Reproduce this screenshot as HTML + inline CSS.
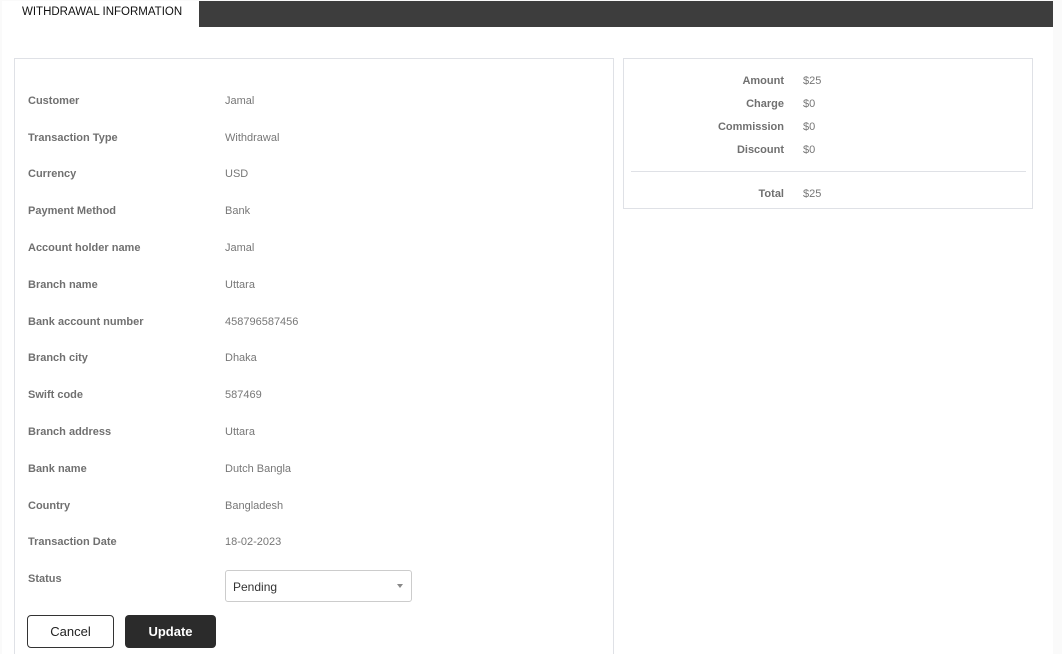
<!DOCTYPE html>
<html><head><style>
html,body{margin:0;width:1062px;height:654px;overflow:hidden}
body{background:#fafafa;font-family:"Liberation Sans",sans-serif;position:relative}
.main{position:absolute;left:2px;top:1px;width:1051px;height:653px;background:#fff}
.bar{position:absolute;left:199px;top:1px;width:854px;height:26px;background:#3d3d3d}
.tab{position:absolute;left:22px;top:6px;font-size:11.5px;color:#111}
.lp{position:absolute;left:14px;top:58px;width:598px;height:600px;border:1px solid #dfe1e6}
.rp{position:absolute;left:623px;top:58px;width:408px;height:149px;border:1px solid #dfe1e6}
.row{position:absolute;font-size:11px;color:#777}
.l{left:28px;font-weight:bold;color:#707070}
.v{left:225px}
.sl{position:absolute;width:150px;left:634px;text-align:right;font-size:11px;font-weight:bold;color:#707070}
.sv{position:absolute;left:803px;font-size:11px;color:#777}
.sel{position:absolute;left:225px;top:570px;width:185px;height:30px;border:1px solid #ccc;border-radius:3px;font-size:12px;color:#333}
.btn{position:absolute;top:615px;border-radius:4px;font-size:13px;text-align:center}
</style></head><body>
<div class="main"></div>
<div class="bar"></div>
<div class="tab">WITHDRAWAL INFORMATION</div>
<div class="lp"></div>
<div class="rp"></div>
<div class="row l" style="top:95px">Customer</div><div class="row v" style="top:95px">Jamal</div>
<div class="row l" style="top:132px">Transaction Type</div><div class="row v" style="top:132px">Withdrawal</div>
<div class="row l" style="top:168px">Currency</div><div class="row v" style="top:168px">USD</div>
<div class="row l" style="top:205px">Payment Method</div><div class="row v" style="top:205px">Bank</div>
<div class="row l" style="top:242px">Account holder name</div><div class="row v" style="top:242px">Jamal</div>
<div class="row l" style="top:279px">Branch name</div><div class="row v" style="top:279px">Uttara</div>
<div class="row l" style="top:316px">Bank account number</div><div class="row v" style="top:316px">458796587456</div>
<div class="row l" style="top:352px">Branch city</div><div class="row v" style="top:352px">Dhaka</div>
<div class="row l" style="top:389px">Swift code</div><div class="row v" style="top:389px">587469</div>
<div class="row l" style="top:426px">Branch address</div><div class="row v" style="top:426px">Uttara</div>
<div class="row l" style="top:463px">Bank name</div><div class="row v" style="top:463px">Dutch Bangla</div>
<div class="row l" style="top:500px">Country</div><div class="row v" style="top:500px">Bangladesh</div>
<div class="row l" style="top:536px">Transaction Date</div><div class="row v" style="top:536px">18-02-2023</div>
<div class="row l" style="top:573px">Status</div>
<div class="sel"><span style="position:absolute;left:7px;top:9px">Pending</span><span style="position:absolute;right:8px;top:13px;width:0;height:0;border-left:3px solid transparent;border-right:3px solid transparent;border-top:4px solid #888"></span></div>
<div class="btn" style="left:27px;width:85px;border:1px solid #333;height:31px;line-height:31px;color:#222">Cancel</div>
<div class="btn" style="left:125px;width:91px;background:#2b2b2b;color:#fff;font-weight:bold;height:33px;line-height:33px">Update</div>
<div class="sl" style="top:75px">Amount</div><div class="sv" style="top:75px">$25</div>
<div class="sl" style="top:98px">Charge</div><div class="sv" style="top:98px">$0</div>
<div class="sl" style="top:121px">Commission</div><div class="sv" style="top:121px">$0</div>
<div class="sl" style="top:144px">Discount</div><div class="sv" style="top:144px">$0</div>
<div style="position:absolute;left:631px;top:171px;width:395px;height:1px;background:#dfe1e6"></div>
<div class="sl" style="top:188px">Total</div><div class="sv" style="top:188px">$25</div>
</body></html>
